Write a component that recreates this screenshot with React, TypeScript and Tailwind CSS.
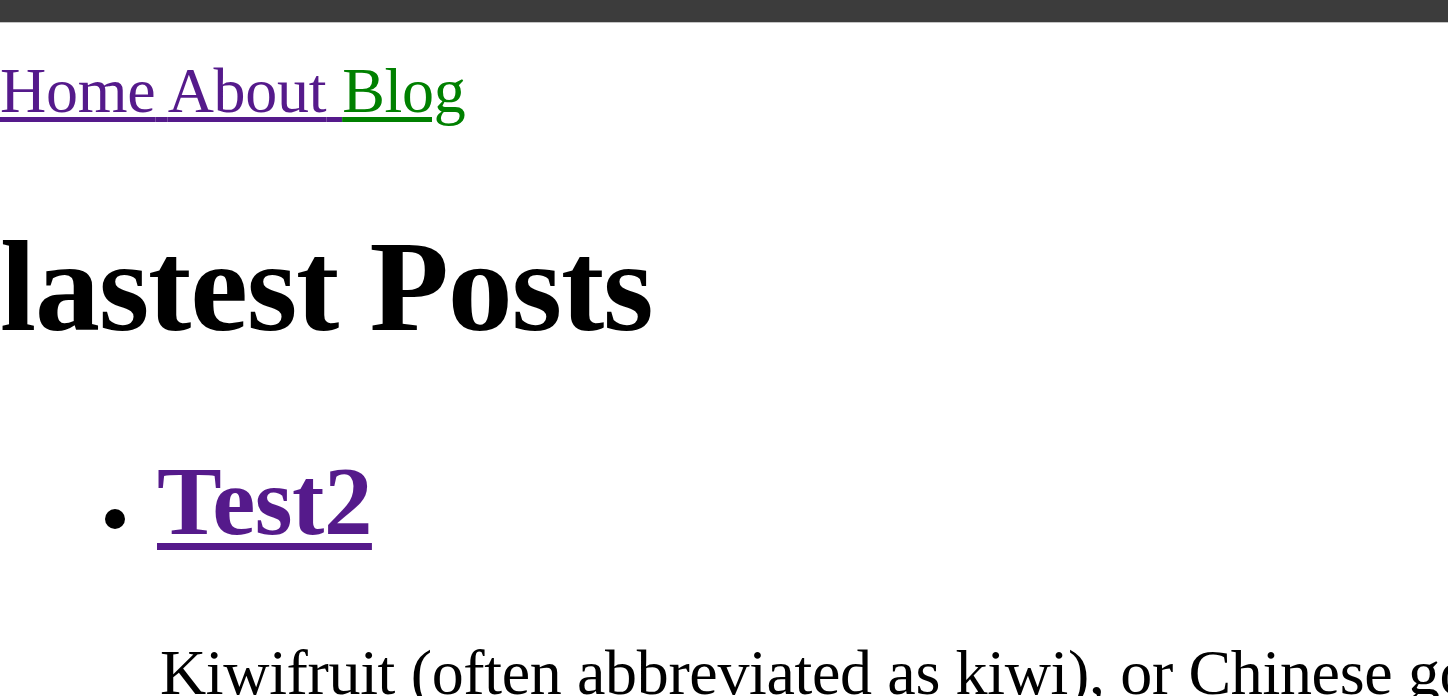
export default function App() {
  const serif = "font-['Liberation_Serif','Times_New_Roman',serif]";

  return (
    <div className={`h-screen w-full overflow-hidden bg-white text-black ${serif}`}>
      {/* top browser-ish bar */}
      <div className="h-[22px] bg-[#3c3c3c]" />
      <div className="h-px bg-[#c4c4c4]" />

      <nav className="mt-[32px] text-[64px] leading-[71px] tracking-[-0.25px] whitespace-nowrap">
        <a
          href="#"
          className="text-[#551a8b] underline decoration-[5px] underline-offset-[5px]"
        >
          Home{" "}
        </a>
        <a
          href="#"
          className="text-[#551a8b] underline decoration-[5px] underline-offset-[5px]"
        >
          About{" "}
        </a>
        <a
          href="#"
          className="text-[#008000] underline decoration-[5px] underline-offset-[5px]"
        >
          Blog
        </a>
      </nav>

      <h1 className="mt-[88px] text-[130px] leading-[144px] font-bold tracking-[-1.2px] whitespace-nowrap">
        lastest Posts
      </h1>

      <ul className="mt-[90px] pl-[160px] text-[64px] leading-[71px]">
        <li className="relative">
          {/* disc bullet */}
          <span className="absolute left-[-55px] top-[61px] h-[20px] w-[20px] rounded-full bg-black" />
          <h2 className="-ml-[3px] text-[97px] leading-[107px] font-bold tracking-[-0.5px]">
            <a
              href="#"
              className="text-[#551a8b] underline decoration-[7px] underline-offset-[9px]"
            >
              Test2
            </a>
          </h2>
          <p className="mt-[82px] whitespace-nowrap tracking-[-0.35px]">
            Kiwifruit (often abbreviated as kiwi), or Chinese gooseberry, is the
            edible berry of several species of woody vines in the genus Actinidia.
          </p>
        </li>
      </ul>
    </div>
  );
}
